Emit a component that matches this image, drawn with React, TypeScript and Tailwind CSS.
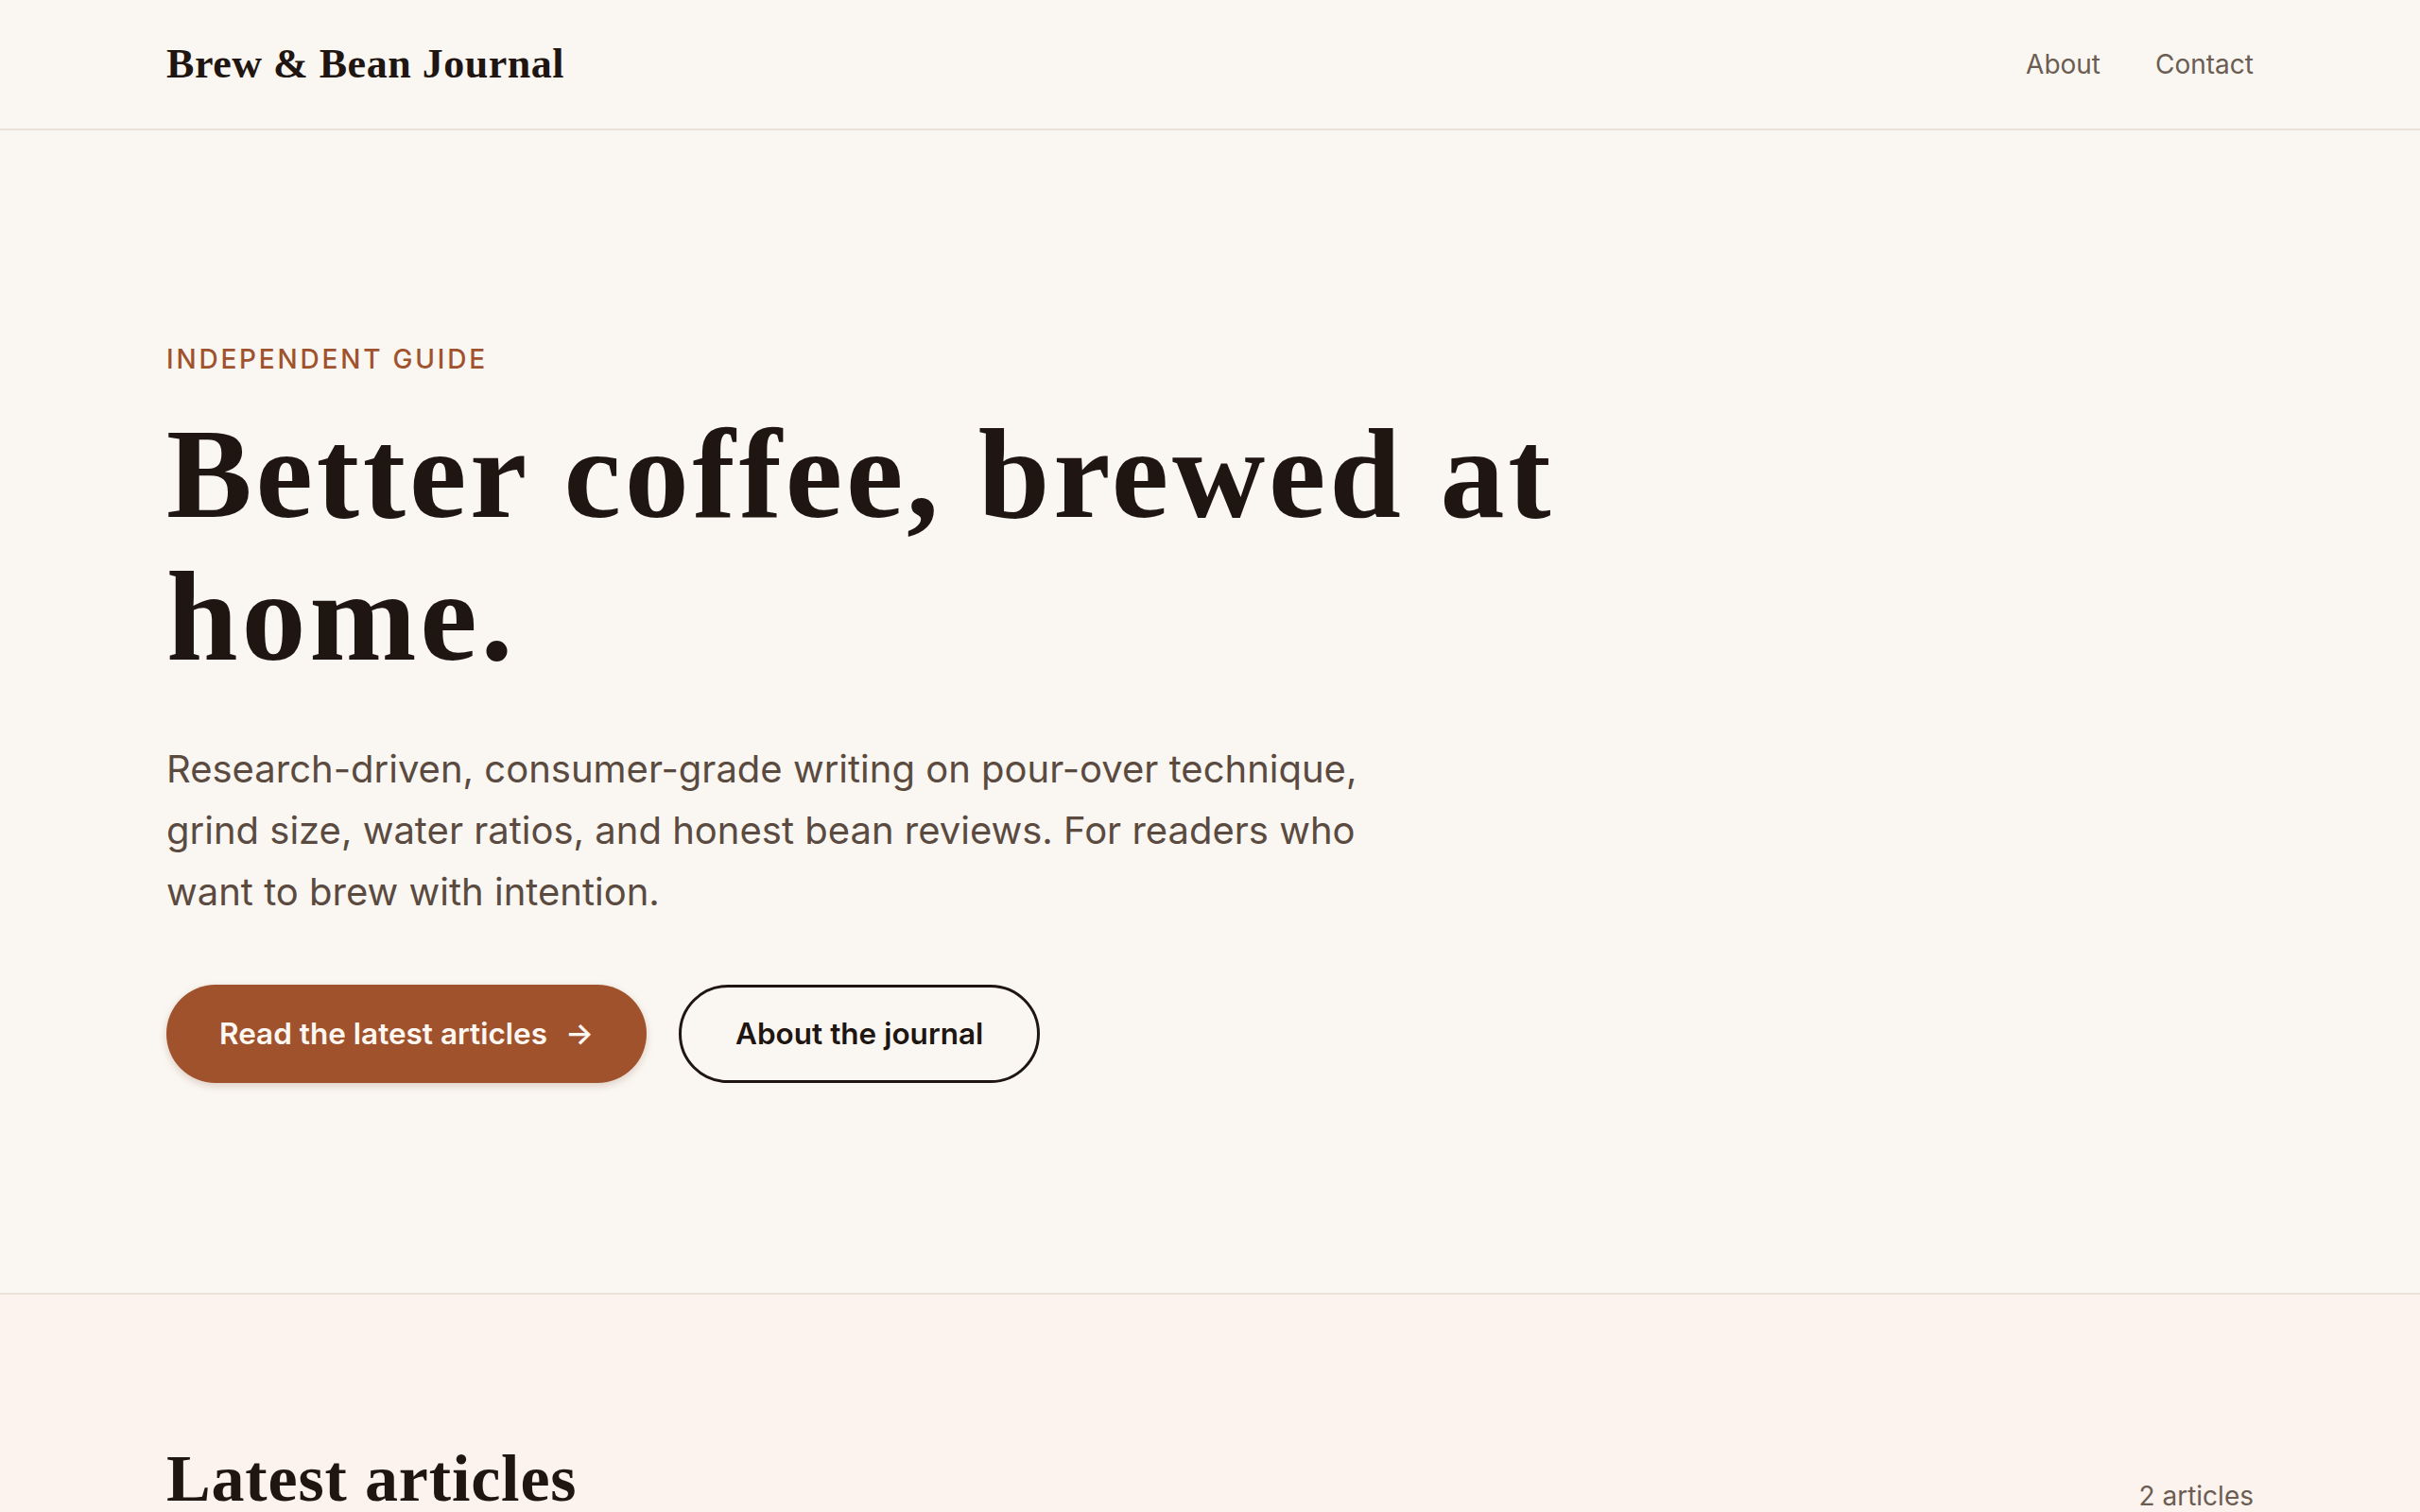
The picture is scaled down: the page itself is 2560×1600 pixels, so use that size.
import React from "react";

export default function App() {
  return (
    <div className="min-h-screen bg-[#faf7f2] font-['Inter',sans-serif] text-[#1f1511]">
      <header className="border-b-2 border-[#ebe3da]">
        <div className="mx-auto flex h-[136px] w-full max-w-[2208px] items-center justify-between">
          <a className="font-['Liberation_Serif',serif] text-[44px] font-bold leading-none tracking-[0.012em] text-[#1f1511]">
            Brew &amp; Bean Journal
          </a>
          <nav className="flex items-center gap-[58px] text-[28px] leading-[40px] text-[#6b5d52]">
            <a>About</a>
            <a>Contact</a>
          </nav>
        </div>
      </header>

      <section className="py-[222px]">
        <div className="mx-auto w-full max-w-[2208px]">
          <p className="text-[28px] font-medium uppercase leading-[40px] tracking-[0.1em] text-[#a0522d]">
            Independent Guide
          </p>
          <h1 className="mt-[26px] max-w-[1640px] font-['Liberation_Serif',serif] text-[136px] font-bold leading-[151px] tracking-[0.028em] text-[#1f1511]">
            Better coffee, brewed at home.
          </h1>
          <p className="mt-[53px] max-w-[1300px] text-[40px] leading-[65px] text-[#5a4a3f]">
            Research-driven, consumer-grade writing on pour-over technique, grind size, water ratios, and honest bean
            reviews. For readers who want to brew with intention.
          </p>
          <div className="mt-[66px] flex items-center gap-[34px]">
            <a className="flex h-[104px] items-center gap-[19px] rounded-full bg-[#a0522d] px-[56px] text-[31.5px] font-semibold text-[#fdf7f2] shadow-[0_3px_8px_rgba(120,60,30,0.22)]">
              <span>Read the latest articles</span>
              <span>→</span>
            </a>
            <a className="flex h-[104px] items-center rounded-full border-[3px] border-[#1f1511] px-[57px] text-[31.5px] font-semibold text-[#1f1511]">
              About the journal
            </a>
          </div>
        </div>
      </section>

      <section className="border-t-2 border-[#ebe3da] bg-[#fcf3ee] pb-[160px] pt-[153px]">
        <div className="mx-auto flex w-full max-w-[2208px] items-end justify-between">
          <h2 className="font-['Liberation_Serif',serif] text-[70px] font-bold leading-[84px] tracking-[0.012em] text-[#1f1511]">
            Latest articles
          </h2>
          <span className="pb-[4px] text-[28px] leading-[40px] text-[#6b5d52]">2 articles</span>
        </div>
      </section>
    </div>
  );
}
